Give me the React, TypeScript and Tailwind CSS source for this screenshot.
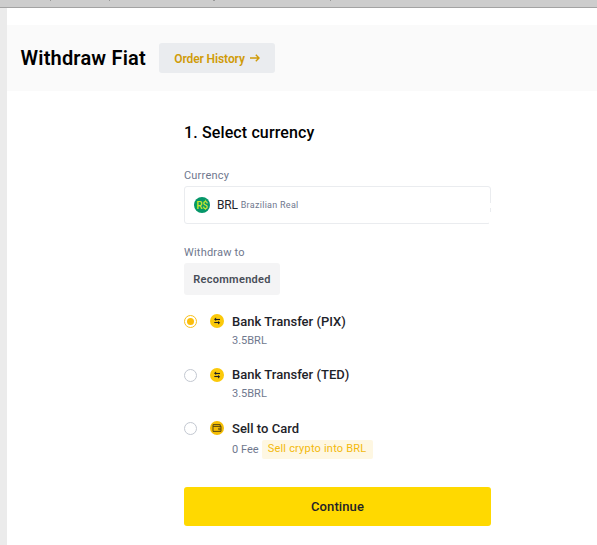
import type { ReactNode } from 'react';

interface Method {
  id: string;
  name: string;
  nameClass: string;
  fee: string;
  feeClass: string;
  icon: ReactNode;
  promo?: string;
}

function TransferIcon() {
  return (
    <svg width="14" height="14" viewBox="0 0 14 14" fill="none" className="block">
      <circle cx="7" cy="7" r="7" fill="#fbc90a" />
      <path d="M10 5.5H5" stroke="#1e2026" strokeWidth="1.1" />
      <path d="M6.1 3.5V7L4 5.3Z" fill="#1e2026" />
      <path d="M4.3 8.5H9" stroke="#1e2026" strokeWidth="1.1" />
      <path d="M8 7V10.4L10.2 8.7Z" fill="#1e2026" />
    </svg>
  );
}

function WalletIcon() {
  return (
    <svg width="14" height="14" viewBox="0 0 14 14" fill="none" className="block">
      <circle cx="7" cy="7" r="7" fill="#f5be05" />
      <path d="M3 3.6H10.2V5.2H11V10.4H3Z" stroke="#594812" strokeWidth="1" />
      <path d="M3 5.4H11" stroke="#594812" strokeWidth="1" />
      <path d="M11 7.2H8.7V8.7H11" stroke="#594812" strokeWidth="0.8" />
    </svg>
  );
}

function Radio({ checked }: { checked: boolean }) {
  return (
    <span
      className={`flex size-[13px] items-center justify-center rounded-full border ${
        checked ? 'border-[#f8c11c]' : 'border-[#c3c8d1]'
      }`}
    >
      {checked && <span className="size-[7px] rounded-full bg-[#fbbd0b]" />}
    </span>
  );
}

const methods: Method[] = [
  {
    id: 'pix',
    name: 'Bank Transfer (PIX)',
    nameClass: 'pt-px',
    fee: '3.5BRL',
    feeClass: 'mt-px',
    icon: <TransferIcon />,
  },
  {
    id: 'ted',
    name: 'Bank Transfer (TED)',
    nameClass: '',
    fee: '3.5BRL',
    feeClass: 'mt-px',
    icon: <TransferIcon />,
  },
  {
    id: 'card',
    name: 'Sell to Card',
    nameClass: 'pt-px',
    fee: '0 Fee',
    feeClass: 'mt-0.5',
    icon: <WalletIcon />,
    promo: 'Sell crypto into BRL',
  },
];

function MethodRow({ method, checked }: { method: Method; checked: boolean }) {
  return (
    <div className="flex h-[53.5px] items-start">
      <div className="pt-[3px]">
        <Radio checked={checked} />
      </div>
      <div className="ml-[13px] pt-[2px]">{method.icon}</div>
      <div className="ml-2">
        <div className={`text-[13px] leading-[18px] font-medium tracking-[0.02px] whitespace-nowrap text-[#1e2329] ${method.nameClass}`}>
          {method.name}
        </div>
        <div className={`flex h-[19px] items-center text-[11px] text-[#6f788e] ${method.feeClass}`}>
          <span className={`whitespace-nowrap ${method.promo ? 'pt-0.5' : ''}`}>{method.fee}</span>
          {method.promo && (
            <span className="ml-[3px] flex h-[19px] w-[111px] items-center justify-center rounded-[2px] bg-[#fef7e2] tracking-[0.2px] whitespace-nowrap text-[#f3b90b]">
              {method.promo}
            </span>
          )}
        </div>
      </div>
    </div>
  );
}

export default function App() {
  return (
    <div className="flex h-[545px] w-[597px] flex-col overflow-hidden bg-white font-['Roboto','Noto_Sans',sans-serif]">
      <div className="flex h-2 shrink-0 items-start border-b border-[#a3a3a3] bg-[#cdcdcd]">
        <span className="ml-[50px] h-px w-px bg-[#999999]" />
        <span className="ml-[58px] h-px w-px bg-[#999999]" />
        <span className="ml-[103px] h-px w-0.5 bg-[#999999]" />
        <span className="ml-[115px] h-px w-px bg-[#999999]" />
      </div>
      <div className="flex flex-1">
        <div className="w-[7px] shrink-0 bg-[#ebebeb]" />
        <div className="flex-1 pt-[17px]">
          <header className="flex h-[66px] items-center bg-[#fafafa] pl-[13.5px]">
            <h1 className="w-[138.5px] text-[20px] leading-6 font-semibold tracking-[0.19px] whitespace-nowrap text-black">
              Withdraw Fiat
            </h1>
            <button className="flex h-[30px] w-[116px] items-center justify-center rounded-[3px] bg-[#eaecef] pt-0.5 text-[12px] font-semibold tracking-[-0.1px] whitespace-nowrap text-[#d09b08]">
              Order History
              <svg width="10" height="8" viewBox="0 0 10 8" fill="none" className="mb-0.5 ml-[5px]">
                <path d="M0 4H9M5.8 0.8L9 4L5.8 7.2" stroke="#d09b08" strokeWidth="1.4" />
              </svg>
            </button>
          </header>

          <main className="ml-[177px] w-[307px]">
            <h2 className="mt-8 h-5 text-[16px] leading-5 font-medium tracking-[0.13px] whitespace-nowrap text-black">
              1. Select currency
            </h2>
            <div className="mt-[25px] h-4 text-[11px] leading-4 tracking-[0.2px] text-[#6f788e]">Currency</div>
            <div className="relative mt-0.5 flex h-[38px] items-center rounded-[3px] border border-[#eaecef] pl-[9px]">
              <span className="flex size-4 items-center justify-center rounded-full bg-[#059669] text-[10px] font-medium tracking-[-0.3px] text-[#c9e62a]">
                R$
              </span>
              <span className="ml-[7px] text-[12px] tracking-[-0.2px] text-[#1e2329]">BRL</span>
              <span className="ml-[3px] pt-0.5 text-[9px] tracking-[0.28px] text-[#6f788e]">Brazilian Real</span>
              <span className="absolute top-4 -right-px h-[21px] w-0.5 bg-white" />
              <span className="absolute top-[21px] -right-px h-1 w-px bg-[#eaecef]" />
            </div>

            <div className="mt-[21px] h-4 text-[11px] leading-4 tracking-[0.2px] text-[#6f788e]">Withdraw to</div>
            <div className="mt-0.5 flex h-8 w-24 items-center justify-center rounded-[3px] bg-[#f4f4f5] pt-0.5 text-[11px] font-semibold tracking-[0.3px] text-[#474d57]">
              Recommended
            </div>

            <div className="mt-[17px] h-[175px]">
              {methods.map((method) => (
                <MethodRow key={method.id} method={method} checked={method.id === 'pix'} />
              ))}
            </div>

            <button className="flex h-[39px] w-full items-center justify-center rounded-[3px] bg-[#ffd900] text-[13px] font-medium tracking-[0.1px] text-[#1e2329]">
              Continue
            </button>
          </main>
        </div>
      </div>
    </div>
  );
}
